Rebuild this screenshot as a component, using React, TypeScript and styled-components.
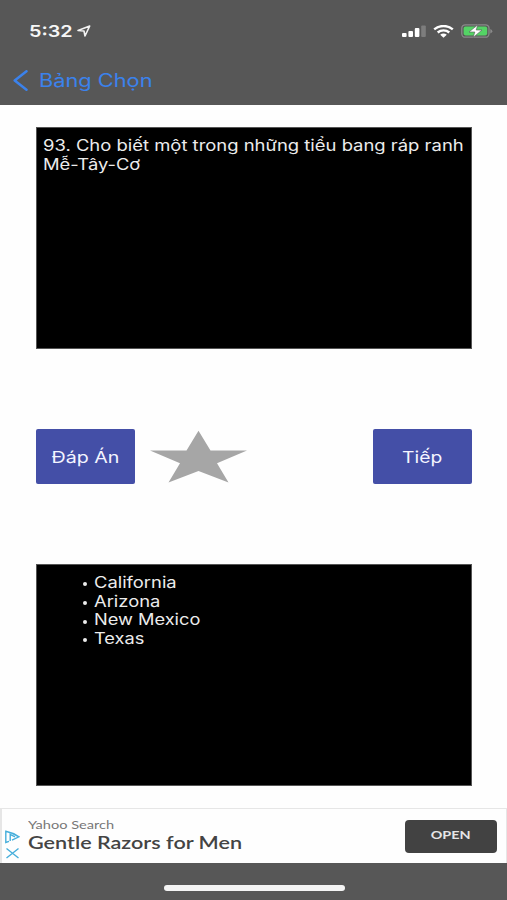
import React from "react";
import styled, { createGlobalStyle } from "styled-components";

const GlobalStyle = createGlobalStyle`
  * { box-sizing: border-box; }
  body { margin: 0; background: #fefefe; }
`;

const Screen = styled.div`
  width: 507px;
  height: 900px;
  display: flex;
  flex-direction: column;
  background: #fefefe;
  font-family: Inter, "Noto Sans", sans-serif;
  overflow: hidden;
`;

const Header = styled.header`
  height: 105px;
  flex: none;
  background: #575757;
`;

const StatusBar = styled.div`
  height: 62px;
  padding: 0 14px 0 29px;
  display: flex;
  align-items: center;
  justify-content: space-between;
`;

const StatusGroup = styled.div<{ $gap: number }>`
  display: flex;
  align-items: center;
  gap: ${(p) => p.$gap}px;
`;

const Wide = styled.span<{ $scale: number; $origin?: string }>`
  display: inline-block;
  white-space: nowrap;
  transform: scaleX(${(p) => p.$scale});
  transform-origin: ${(p) => p.$origin ?? "left"} center;
`;

const Clock = styled.time`
  width: 48px;
  color: #f6f6f6;
  font-size: 16.5px;
  font-weight: 600;
  line-height: 20px;
`;

const BackLink = styled.a`
  height: 37px;
  padding-left: 13px;
  display: flex;
  align-items: center;
  gap: 11px;
  color: #3b82ec;
  font-size: 18px;
`;

const Main = styled.main`
  height: 703px;
  flex: none;
  padding: 22px 35px 0 36px;
`;

const Panel = styled.section`
  height: 222px;
  padding: 9px 6px;
  border: 1px solid #555;
  background: #000;
  color: #ececec;
  font-size: 15.3px;
  line-height: 18.7px;
`;

const Line = styled.div`
  height: 18.7px;
`;

const Actions = styled.div`
  height: 215px;
  display: flex;
  align-items: center;
`;

const Button = styled.button`
  width: 99px;
  height: 55px;
  padding: 0;
  border: 0;
  border-radius: 2px;
  background: #444fa7;
  color: #f4f5ff;
  font-family: inherit;
  font-size: 16.5px;
`;

const StarIcon = styled.svg`
  margin: 0 auto 0 15px;
`;

const Answers = styled.ul`
  margin: 0;
  padding: 0 0 0 40px;
  list-style: none;
`;

const Answer = styled.li`
  height: 18.7px;
  display: flex;
  align-items: center;
  gap: 7px;

  &::before {
    content: "";
    width: 4px;
    height: 4px;
    margin-top: 2px;
    border-radius: 50%;
    background: #ececec;
  }
`;

const Ad = styled.aside`
  height: 55px;
  flex: none;
  padding: 0 9px 0 3px;
  display: flex;
  align-items: center;
  border: solid #e6e6e6;
  border-width: 1px 1px 0 2px;
  background: #fefefe;
`;

const AdMarks = styled.svg`
  align-self: flex-end;
  flex: none;
  margin: 0 8px 2px 0;
`;

const AdCopy = styled.div`
  flex: 1;
  padding-bottom: 2px;
  font-family: Lato, "Open Sans", sans-serif;
`;

const Sponsor = styled.div`
  color: #777;
  font-size: 11.5px;
  line-height: 14px;
`;

const Headline = styled.div`
  color: #444;
  font-size: 17px;
  font-weight: 600;
  line-height: 21px;
`;

const OpenButton = styled.button`
  width: 92px;
  height: 33px;
  padding: 0 0 2px;
  border: 0;
  border-radius: 4px;
  background: #424242;
  color: #e6e6e6;
  font: 700 12px/14px Lato, sans-serif;
`;

const Footer = styled.footer`
  flex: 1;
  padding: 22px 0 0 164px;
  background: #575757;
`;

const HomeIndicator = styled.div`
  width: 181px;
  height: 6px;
  border-radius: 3px;
  background: #f4f4f4;
`;

export default function App() {
  return (
    <Screen>
      <GlobalStyle />
      <Header>
        <StatusBar>
          <StatusGroup $gap={0}>
            <Clock><Wide $scale={1.2}>5:32</Wide></Clock>
            <svg width="14" height="12" viewBox="0 0 14 12" fill="none" stroke="#f3f3f3" strokeWidth="1.6" strokeLinejoin="round">
              <path d="M1 5.5 12.7 1 8 11 7 6Z" />
            </svg>
          </StatusGroup>
          <StatusGroup $gap={7}>
            <svg width="24" height="13" viewBox="0 0 24 13" fill="#fff">
              <rect x="0" y="8" width="4.6" height="4" rx="1" />
              <rect x="6.4" y="6" width="4.6" height="6" rx="1" />
              <rect x="12.8" y="3" width="4.6" height="9" rx="1" />
              <rect x="19.2" y="0.5" width="4.6" height="11.5" rx="1" fill="#7d7d7d" />
            </svg>
            <svg width="21" height="13" viewBox="0 0 21 13" fill="none" stroke="#fff" strokeWidth="2.4">
              <path d="M1.2 4.4C6.4-.1 14.6-.1 19.8 4.4M4.7 7.5c3.3-2.8 8.3-2.8 11.6 0" />
              <path d="M7.2 9.8c1.9-1.6 4.7-1.6 6.6 0L10.5 12.7Z" fill="#fff" stroke="none" />
            </svg>
            <svg width="32" height="14" viewBox="0 0 32 14">
              <rect x="0.8" y="0.8" width="27.2" height="12.4" rx="3.5" fill="none" stroke="#8a8a8a" strokeWidth="1.3" />
              <rect x="2.6" y="2.6" width="23.6" height="8.8" rx="1.8" fill="#54d365" />
              <path d="M29.3 5v4.4q2-.7 2-2.2T29.3 5" fill="#8a8a8a" />
              <path d="M16.8.8 8 8h5.8l-1.6 5.4L21 6h-5.8Z" fill="#fff" stroke="#575757" strokeWidth=".6" />
            </svg>
          </StatusGroup>
        </StatusBar>
        <BackLink>
          <svg width="15" height="21" viewBox="0 0 15 21" fill="none" stroke="currentColor" strokeWidth="2.5" strokeLinecap="round" strokeLinejoin="round">
            <path d="M13.5 1.3 1.7 10.5 13.5 19.7" />
          </svg>
          <Wide $scale={1.21}>Bảng Chọn</Wide>
        </BackLink>
      </Header>
      <Main>
        <Panel>
          <Line><Wide $scale={1.205}>93. Cho biết một trong những tiểu bang ráp ranh</Wide></Line>
          <Line><Wide $scale={1.2}>Mễ-Tây-Cơ</Wide></Line>
        </Panel>
        <Actions>
          <Button><Wide $scale={1.19} $origin="center">Đáp Án</Wide></Button>
          <StarIcon width="97" height="53" viewBox="0 0 97 53">
            <path d="M48.5 0.8 60.5 20.5H97L67 33.2 78.5 52.5 48.5 41 18.5 52.5 30 33.2 0 20.5H36.5Z" fill="#a6a6a6" />
          </StarIcon>
          <Button><Wide $scale={1.17} $origin="center">Tiếp</Wide></Button>
        </Actions>
        <Panel>
          <Answers>
            <Answer><Wide $scale={1.2}>California</Wide></Answer>
            <Answer><Wide $scale={1.2}>Arizona</Wide></Answer>
            <Answer><Wide $scale={1.19}>New Mexico</Wide></Answer>
            <Answer><Wide $scale={1.19}>Texas</Wide></Answer>
          </Answers>
        </Panel>
      </Main>
      <Ad>
        <AdMarks width="15" height="31" viewBox="0 0 15 31" fill="none" stroke="#46aedb" strokeWidth="1.4">
          <path d="M4 11.3.8 12.5V1.3Q7 2.5 14 6.8L7 10.2M5.2 11V4.4L10 6.8M1.5 18.5l12 9.5m0-9.5-12 9.5" />
        </AdMarks>
        <AdCopy>
          <Sponsor><Wide $scale={1.27}>Yahoo Search</Wide></Sponsor>
          <Headline><Wide $scale={1.27}>Gentle Razors for Men</Wide></Headline>
        </AdCopy>
        <OpenButton><Wide $scale={1.2} $origin="center">OPEN</Wide></OpenButton>
      </Ad>
      <Footer><HomeIndicator /></Footer>
    </Screen>
  );
}
